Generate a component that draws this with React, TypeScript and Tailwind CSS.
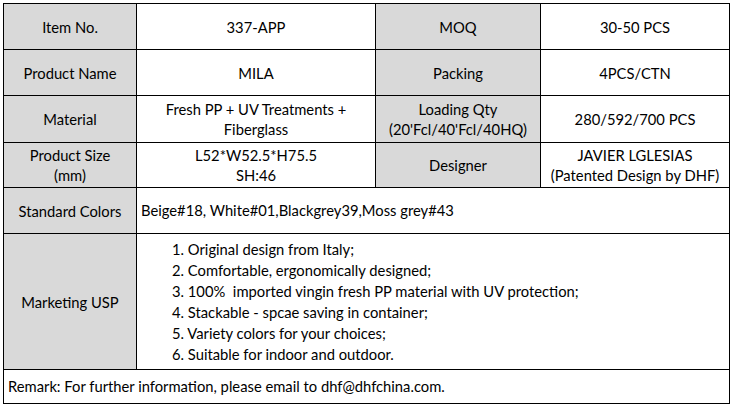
import React from "react";

type Row = { label: string; value: React.ReactNode; label2: string; value2: React.ReactNode };

const rows: Row[] = [
  { label: "Item No.", value: "337-APP", label2: "MOQ", value2: "30-50 PCS" },
  { label: "Product Name", value: "MILA", label2: "Packing", value2: "4PCS/CTN" },
  {
    label: "Material",
    value: (
      <>
        Fresh PP + UV Treatments +<br />
        Fiberglass
      </>
    ),
    label2: "",
    value2: "280/592/700 PCS",
  },
  {
    label: "",
    value: (
      <>
        L52*W52.5*H75.5
        <br />
        SH:46
      </>
    ),
    label2: "Designer",
    value2: (
      <>
        JAVIER LGLESIAS
        <br />
        (Patented Design by DHF)
      </>
    ),
  },
];

const usp = [
  "1. Original design from Italy;",
  "2. Comfortable, ergonomically designed;",
  "3. 100%  imported vingin fresh PP material with UV protection;",
  "4. Stackable - spcae saving in container;",
  "5. Variety colors for your choices;",
  "6. Suitable for indoor and outdoor.",
];

const head = "flex items-center justify-center text-center bg-[#d9d9d9] border-r border-b border-black leading-[20px]";
const cell = "flex items-center justify-center text-center bg-white border-r border-b border-black leading-[20px]";

export default function App() {
  return (
    <div className="w-[733px] h-[409px] bg-white pt-[3px] pl-[3px] text-black text-[14.75px] font-['Lato','Liberation_Sans',sans-serif]">
      <div className="grid w-[727px] grid-cols-[133px_239px_165px_189px] grid-rows-[46px_46px_47px_45px_46px_136px_34px] border-l border-t border-black">
        {rows.map((r, i) => (
          <React.Fragment key={i}>
            <div className={head}>
              {i === 3 ? (
                <span>
                  Product Size
                  <br />
                  (mm)
                </span>
              ) : (
                r.label
              )}
            </div>
            <div className={cell}>
              <span>{r.value}</span>
            </div>
            <div className={head}>
              {i === 2 ? (
                <span>
                  Loading Qty
                  <br />
                  (20'Fcl/40'Fcl/40HQ)
                </span>
              ) : (
                r.label2
              )}
            </div>
            <div className={cell}>
              <span>{r.value2}</span>
            </div>
          </React.Fragment>
        ))}

        <div className={head}>Standard Colors</div>
        <div className="col-span-3 flex items-center pl-[4px] border-r border-b border-black">
          Beige#18, White#01,Blackgrey39,Moss grey#43
        </div>

        <div className={head}>Marketing USP</div>
        <div className="col-span-3 flex flex-col justify-center pl-[35px] leading-[21px] border-r border-b border-black">
          {usp.map((u) => (
            <div key={u} className="whitespace-pre">
              {u}
            </div>
          ))}
        </div>

        <div className="col-span-4 flex items-center pl-[4px] border-r border-b border-black">
          Remark: For further information, please email to dhf@dhfchina.com.
        </div>
      </div>
    </div>
  );
}
